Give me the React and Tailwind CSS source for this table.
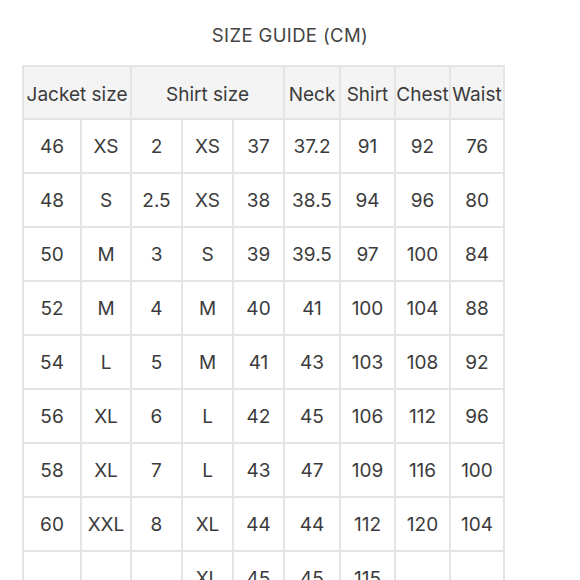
const rows = [
  ["46", "XS", "2", "XS", "37", "37.2", "91", "92", "76"],
  ["48", "S", "2.5", "XS", "38", "38.5", "94", "96", "80"],
  ["50", "M", "3", "S", "39", "39.5", "97", "100", "84"],
  ["52", "M", "4", "M", "40", "41", "100", "104", "88"],
  ["54", "L", "5", "M", "41", "43", "103", "108", "92"],
  ["56", "XL", "6", "L", "42", "45", "106", "112", "96"],
  ["58", "XL", "7", "L", "43", "47", "109", "116", "100"],
  ["60", "XXL", "8", "XL", "44", "44", "112", "120", "104"],
  ["", "", "", "XL", "45", "45", "115", "", ""],
];

const widths = [58, 50, 51, 51, 51, 56, 55, 55, 54];

export default function App() {
  return (
    <div
      className="h-[580px] w-[580px] overflow-hidden bg-white text-[#3b3b3b]"
      style={{ fontFamily: "Inter, 'Noto Sans', sans-serif" }}
    >
      <h1 className="pt-[24px] text-center text-[18.5px] leading-[22px] font-normal tracking-[0.02em] text-[#444]">
        SIZE GUIDE (CM)
      </h1>

      <table className="mt-[19px] ml-[22px] table-fixed border-collapse text-center text-[19px]">
        <colgroup>
          {widths.map((w, i) => (
            <col key={i} style={{ width: w }} />
          ))}
        </colgroup>
        <thead>
          <tr className="h-[53px] bg-[#f4f4f4]">
            <th colSpan={2} className="border-2 border-[#e4e4e4] p-0 pt-[5px] font-normal whitespace-nowrap">
              Jacket size
            </th>
            <th colSpan={3} className="border-2 border-[#e4e4e4] p-0 pt-[5px] font-normal whitespace-nowrap">
              Shirt size
            </th>
            <th className="border-2 border-[#e4e4e4] p-0 pt-[5px] font-normal">Neck</th>
            <th className="border-2 border-[#e4e4e4] p-0 pt-[5px] font-normal">Shirt</th>
            <th className="border-2 border-[#e4e4e4] p-0 pt-[5px] font-normal">Chest</th>
            <th className="border-2 border-[#e4e4e4] p-0 pt-[5px] font-normal">Waist</th>
          </tr>
        </thead>
        <tbody>
          {rows.map((row, r) => (
            <tr key={r} className="h-[54px]">
              {row.map((cell, c) => (
                <td key={c} className="border-2 border-[#e4e4e4] p-0 pt-[3px] whitespace-nowrap">
                  {cell}
                </td>
              ))}
            </tr>
          ))}
        </tbody>
      </table>
    </div>
  );
}
